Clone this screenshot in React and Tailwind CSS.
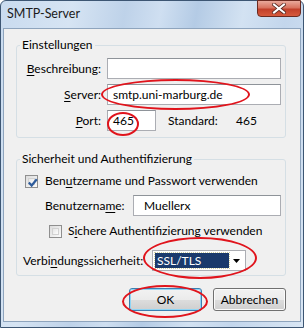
import React from "react";

function Check({ checked }) {
  return (
    <div className="w-[13px] h-[13px] border border-[#8f8f8f] bg-gradient-to-br from-[#dcdcdc] to-[#fbfbfb] p-[2px] shrink-0">
      <div className="w-full h-full border border-[#d2d2d2] bg-gradient-to-br from-[#e6e6e6] to-[#fdfdfd] relative">
        {checked && (
          <svg viewBox="0 0 9 9" className="absolute -left-[2px] -top-[2px] w-[11px] h-[11px]">
            <path d="M1.5 4.5 L3.8 7 L8 1.8" fill="none" stroke="#2d5c9c" strokeWidth="1.8" />
          </svg>
        )}
      </div>
    </div>
  );
}

function Input({ className = "", children }) {
  return (
    <div className={"h-[21px] border border-[#abadb3] border-t-[#8e9399] bg-white flex items-center pl-[5px] " + className}>
      {children}
    </div>
  );
}

function U({ children }) {
  return <span className="underline underline-offset-2">{children}</span>;
}

function Btn({ children, def }) {
  return (
    <div
      className={
        "w-[73px] h-[23px] rounded-[3px] border flex items-center justify-center relative " +
        (def ? "border-[#3c7fb1] shadow-[inset_0_0_0_1px_#8fd5f5]" : "border-[#707070] shadow-[inset_0_0_0_1px_#fbfbfb]")
      }
      style={{
        background: "linear-gradient(to bottom, #f2f2f2 0%, #ebebeb 50%, #dddddd 51%, #cfcfcf 100%)",
      }}
    >
      {children}
    </div>
  );
}

export default function App() {
  return (
    <div className="relative w-[304px] h-[329px] bg-white overflow-hidden text-[12px] text-black font-['Lato',sans-serif] leading-[16px]">
      <div
        className="w-[304px] h-[328px] border border-[#3d5673] rounded-t-[6px] flex flex-col"
        style={{
          background:
            "linear-gradient(100deg, #c9dbef 0%, #d6e4f3 20%, #bed2e9 35%, #cfdff1 45%, #b4cbe5 55%, #d3e2f2 68%, #c3d6ec 80%, #d9e6f4 100%)",
        }}
      >
        <div className="h-[27px] flex items-start justify-between pl-[6px] pr-[2px]">
          <span className="mt-[5px] text-[12.5px] text-[#1b1b1b]">SMTP-Server</span>
          <div
            className="w-[44px] h-[17px] -mt-[1px] rounded-b-[4px] border border-[#6b2a20] flex items-center justify-center"
            style={{ background: "linear-gradient(to bottom, #e9a99b 0%, #d8735f 45%, #c2402a 55%, #d65a3d 100%)" }}
          >
            <svg viewBox="0 0 14 11" className="w-[14px] h-[11px]">
              <path d="M2 1.5 L12 9.5 M12 1.5 L2 9.5" stroke="#5a2a22" strokeWidth="3.6" strokeLinecap="square" />
              <path d="M2 1.5 L12 9.5 M12 1.5 L2 9.5" stroke="#ffffff" strokeWidth="2" strokeLinecap="square" />
            </svg>
          </div>
        </div>
        <div className="mx-[2px] h-[294px] border border-[#8ea4bd] bg-[#f0f0f0] pt-[8px] pl-[12px] pr-[13px]">
          <fieldset className="w-[270px] border border-[#d5dfe5] rounded-[3px] pb-[6px]">
            <legend className="ml-[3px] px-[2px] leading-[16px]">Einstellungen</legend>
            <div className="flex flex-col gap-[5px] pl-[3px] mt-[5px]">
              <div className="flex items-center gap-[6px]">
                <span className="w-[81px] text-right"><U>B</U>eschreibung:</span>
                <Input className="w-[174px]" />
              </div>
              <div className="flex items-center gap-[6px]">
                <span className="w-[81px] text-right"><U>S</U>erver:</span>
                <Input className="w-[174px]">smtp.uni-marburg.de</Input>
              </div>
              <div className="flex items-center gap-[6px]">
                <span className="w-[81px] text-right"><U>P</U>ort:</span>
                <Input className="w-[49px]">465</Input>
                <span className="ml-[6px] w-[62px]">Standard:</span>
                <span>465</span>
              </div>
            </div>
          </fieldset>
          <fieldset className="w-[270px] border border-[#d5dfe5] rounded-[3px] pb-[4px] mt-[13px]">
            <legend className="ml-[3px] px-[2px] leading-[16px]">Sicherheit und Authentifizierung</legend>
            <div className="flex flex-col pl-[8px]">
              <div className="flex items-center gap-[7px] mt-[6px] h-[16px]">
                <Check checked />
                <span>Ben<U>u</U>tzername und Passwort verwenden</span>
              </div>
              <div className="flex items-center mt-[6px] pl-[20px] gap-[9px]">
                <span className="w-[79px]">Benutzerna<U>m</U>e:</span>
                <Input className="w-[148px] pl-[10px]">Muellerx</Input>
              </div>
              <div className="flex items-center gap-[6px] mt-[7px] h-[16px] pl-[24px]">
                <Check />
                <span>S<U>i</U>chere Authentifizierung verwenden</span>
              </div>
              <div className="flex items-center mt-[11px] -ml-[2px] gap-[5px]">
                <span className="w-[124px]">Verbi<U>n</U>dungssicherheit:</span>
                <div className="w-[94px] h-[21px] border border-[#abadb3] bg-white flex items-center p-[2px]">
                  <div className="w-[74px] h-full bg-[#1a3a6c] text-white outline-1 outline-dotted outline-[#cfcf9f] pl-[2px] flex items-center">
                    SSL/TLS
                  </div>
                  <div className="flex-1 flex items-center justify-center">
                    <svg viewBox="0 0 7 4" className="w-[7px] h-[4px]">
                      <path d="M0 0 H7 L3.5 4 Z" fill="#000" />
                    </svg>
                  </div>
                </div>
              </div>
            </div>
          </fieldset>
          <div className="flex justify-end gap-[11px] mt-[12px] pr-[1px]">
            <Btn def>OK</Btn>
            <Btn>Abbrechen</Btn>
          </div>
        </div>
      </div>
      <div className="absolute left-[101px] top-[79px] w-[149px] h-[31px] rounded-[50%] border-2 border-[#e0141c]" />
      <div className="absolute left-[107px] top-[112px] w-[32px] h-[24px] rounded-[50%] border-2 border-[#e0141c]" />
      <div className="absolute left-[143px] top-[237px] w-[114px] h-[42px] rounded-[50%] border-2 border-[#e0141c]" />
      <div className="absolute left-[122px] top-[285px] w-[86px] h-[33px] rounded-[50%] border-2 border-[#e0141c]" />
    </div>
  );
}
